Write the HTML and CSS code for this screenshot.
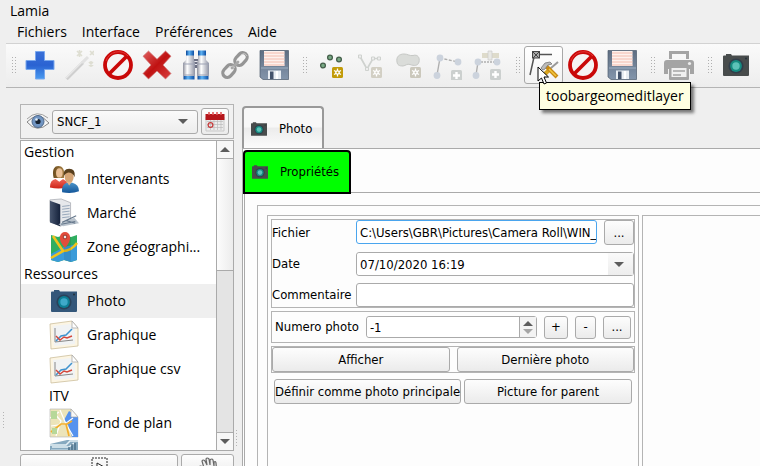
FILE: index.html
```html
<!DOCTYPE html>
<html lang="fr">
<head>
<meta charset="utf-8">
<title>Lamia</title>
<link rel="stylesheet" href="styles.css">
</head>
<body>
<svg class="defs" aria-hidden="true">
  <defs>
    <linearGradient id="blue" x1="0" y1="0" x2="0" y2="1"><stop offset="0" stop-color="#3a70d8"/><stop offset=".5" stop-color="#2a63d2"/><stop offset="1" stop-color="#4a9bf0"/></linearGradient>
    <linearGradient id="red" x1="0" y1="0" x2="1" y2="1"><stop offset="0" stop-color="#e06060"/><stop offset=".5" stop-color="#c01212"/><stop offset="1" stop-color="#d84040"/></linearGradient>
    <linearGradient id="tube" x1="0" y1="0" x2="1" y2="0"><stop offset="0" stop-color="#8d8f9c"/><stop offset=".35" stop-color="#ffffff"/><stop offset="1" stop-color="#8f93a4"/></linearGradient>
    <linearGradient id="lens" x1="0" y1="0" x2="1" y2="0"><stop offset="0" stop-color="#0a4596"/><stop offset=".4" stop-color="#5fb4f5"/><stop offset="1" stop-color="#0b4da4"/></linearGradient>
    <linearGradient id="steel" x1="0" y1="0" x2="0" y2="1"><stop offset="0" stop-color="#5f6e82"/><stop offset="1" stop-color="#8395ab"/></linearGradient>
    <linearGradient id="hair" x1="0" y1="0" x2="1" y2="0"><stop offset="0" stop-color="#6b4c1d"/><stop offset="1" stop-color="#a98347"/></linearGradient>
    <linearGradient id="redbody" x1="0" y1="0" x2="0" y2="1"><stop offset="0" stop-color="#f0675a"/><stop offset="1" stop-color="#cf2418"/></linearGradient>
    <linearGradient id="bluebody" x1="0" y1="0" x2="0" y2="1"><stop offset="0" stop-color="#4b93c8"/><stop offset="1" stop-color="#13569a"/></linearGradient>
    <linearGradient id="navy" x1="0" y1="0" x2="1" y2="0"><stop offset="0" stop-color="#47556e"/><stop offset="1" stop-color="#14213b"/></linearGradient>
  </defs>
  <symbol id="i-plus" viewBox="0 0 30 30"><path d="M10.500 1.500h9v9h9.500v9h-9.500v9.500h-9v-9.500h-9.500v-9h9.500z" fill="url(#blue)" stroke="#79a8ee" stroke-width="1" stroke-linejoin="round"/></symbol>
  <symbol id="i-wand" viewBox="0 0 30 30"><path d="M2.500 29L19 12.500" stroke="#cfcfcf" stroke-width="3.400"/><path d="M2 28L22 8" stroke="#e8e8e8" stroke-width="1.500"/><path d="M18 13l6-6" stroke="#e2e2e2" stroke-width="3"/><g stroke="#deded2" stroke-width="1.600"><path d="M13 1l5 5m0-5l-5 5M15.500 0v7M26 1l4 4m0-4l-4 4M25 12l4 4m0-4l-4 4M27 11v6"/></g></symbol>
  <symbol id="i-no" viewBox="0 0 30 30"><circle cx="15" cy="15" r="13" fill="#f6f3f3" stroke="#c90808" stroke-width="3.800"/><path d="M6 24L24 6" stroke="#c90808" stroke-width="3.800"/><path d="M3 11a13 13 0 0 1 22-5" fill="none" stroke="#e53535" stroke-width="1"/></symbol>
  <symbol id="i-cross" viewBox="0 0 30 30"><path d="M6.500 1L15 9.200 23.500 1 29 6.200 21 15l8 8.500-5.500 5.500-8.500-8-8.500 8L1 23.500 9 15 1 6.200z" fill="url(#red)" stroke="#d07a7a" stroke-width=".7"/></symbol>
  <symbol id="i-bino" viewBox="0 0 30 30"><path d="M12 9h6v9h-6z" fill="#6c7084"/><path d="M12 11.500h6M12 14.500h6" stroke="#e8e8ee"/><path d="M5 5h8v5l1 3v13H2V13l3-3z" fill="url(#tube)"/><path d="M17 5h8v5l3 3v13H16V13l1-3z" fill="url(#tube)"/><path d="M2 14h12M16 14h12M2 25h12M16 25h12" stroke="#9ea3b5"/><path d="M5 .5h8v5H5z" fill="url(#lens)"/><path d="M17 .5h8v5h-8z" fill="url(#lens)"/><path d="M2.500 26h11v3.500h-11z" fill="url(#lens)"/><path d="M16.500 26h11v3.500h-11z" fill="url(#lens)"/></symbol>
  <symbol id="i-link" viewBox="0 0 30 30"><g fill="none" stroke="#959595" stroke-width="3.200"><rect x="-7" y="-4.500" width="14" height="9" rx="4.500" transform="translate(21 9) rotate(-48)"/><rect x="-7" y="-4.500" width="14" height="9" rx="4.500" transform="translate(9 21) rotate(-48)"/></g><path d="M12 18l6-6" stroke="#a8a8a8" stroke-width="2.800" stroke-linecap="round"/><g fill="none" stroke="#c9c9c9" stroke-width="1"><path d="M17 9l4-4q4-3 6 1M5 21l4-4q4-2 6 1"/></g></symbol>
  <symbol id="i-save" viewBox="0 0 30 30"><path d="M1 .5h28.500v29H4L1 27z" fill="url(#steel)" stroke="#4e5b6d" stroke-width=".7"/><path d="M5 1h20.500v15H5z" fill="#fdf1ed"/><path d="M5 3h20.500M5 6h20.500M5 9h20.500M5 12h20.500M5 15h20.500" stroke="#f3bcae"/><path d="M2 18h27" stroke="#9fb0c4"/><rect x="9" y="20.500" width="13" height="8.500" fill="#e8edf2"/><rect x="11" y="21.500" width="3.500" height="7.500" fill="#43536b"/><path d="M18 21v8" stroke="#fff" stroke-width="2"/></symbol>
  <symbol id="i-star" viewBox="0 0 11 11"><rect width="11" height="11" rx="1.500"/><path d="M5.500 1.500v8M2 3.500l7 4M9 3.500l-7 4" stroke="#fff" stroke-width="1.300"/><circle cx="5.500" cy="5.500" r="2.300" fill="#fff"/><circle cx="5.500" cy="5.500" r="1"/></symbol>
  <symbol id="i-points" viewBox="0 0 30 30"><g fill="#79a985" stroke="#46604c" stroke-width="1.300"><circle cx="7" cy="15.500" r="2.400"/><circle cx="14" cy="7.500" r="2.400"/><circle cx="23" cy="9.500" r="2.400"/></g><use href="#i-star" x="16" y="17" width="11" height="11" fill="#c29b08"/></symbol>
  <symbol id="i-line" viewBox="0 0 30 30"><path d="M5 6.500L12 19l6-10.500h6" fill="none" stroke="#cfd2cf" stroke-width="1.700"/><g fill="#eee" stroke="#cfd2cf"><path d="M3.500 5h3v3h-3zM10.500 17.500h3v3h-3zM16.500 7h3v3h-3zM22.500 7h3v3h-3z"/></g><use href="#i-star" x="16" y="17" width="11" height="11" fill="#d2cfc4"/></symbol>
  <symbol id="i-poly" viewBox="0 0 30 30"><path d="M3 12c-1-5 2-8 7-8 4 0 5 2 9 1.500C24 4 26 8 25 12c-1 4-5 4-9 2.500-3-1-4 1-7 1.500-4 0-5.500-1-6-4z" fill="#dadcd9" stroke="#c6c8c5"/><use href="#i-star" x="16" y="17" width="11" height="11" fill="#cbc8bc"/></symbol>
  <symbol id="i-add" viewBox="0 0 11 11"><rect width="11" height="11" rx="1.500" fill="#ccd0cf"/><path d="M5.500 2v7M2 5.500h7" stroke="#fff" stroke-width="2.400"/></symbol>
  <symbol id="i-node" viewBox="0 0 30 30"><path d="M4 25L7 8" stroke="#afafaf" stroke-width="1.400"/><path d="M7 8l18 4" stroke="#afafaf" stroke-width="1.400" stroke-dasharray="3 1.500"/><g fill="#ccd3dd"><circle cx="4" cy="25.500" r="3.400"/><circle cx="7" cy="8" r="3.400"/><circle cx="25" cy="12" r="3.400"/></g><use href="#i-add" x="18" y="20" width="11" height="11"/></symbol>
  <symbol id="i-node2" viewBox="0 0 30 30"><path d="M10 3h17v5H10z" fill="#dedbcb"/><path d="M16 1h4v9h-4z" fill="#e9e9e5" stroke="#ccc" stroke-width=".7"/><path d="M4 25L6 12" stroke="#afafaf" stroke-width="1.400"/><path d="M6 12h19" stroke="#afafaf" stroke-width="1.400" stroke-dasharray="2 1"/><g fill="#ccd3dd"><circle cx="4" cy="25.500" r="3.400"/><circle cx="6" cy="12" r="3.400"/><circle cx="25" cy="12" r="3.400"/></g><use href="#i-add" x="18" y="19" width="11" height="11"/></symbol>
  <symbol id="i-edit" viewBox="0 0 30 30"><path d="M1 25L5 7M6 4.500h17" stroke="#555" stroke-width="1.500"/><rect x="3.500" y="1.500" width="7" height="6.500" fill="#aaa" stroke="#444"/><path d="M4 2l6 6m0-6L4 8" stroke="#444"/><path d="M29 12L16 23" stroke="#999" stroke-width="2"/><path d="M20 20l-6 6" stroke="#d9a520" stroke-width="4"/><path d="M17 16l11 11" stroke="#c98a12" stroke-width="4"/><path d="M20 19l7 7" stroke="#f2c740" stroke-width="1.500"/><path d="M12 18l4-5 5-1 2 2-4 1-3 4-2 1z" fill="#bbb" stroke="#777" stroke-width=".8"/></symbol>
  <symbol id="i-print" viewBox="0 0 30 30"><path d="M5 1h20v8h-3V4H8v5H5z" fill="#a4a4a4"/><path d="M0 13q0-3 3-3h24q3 0 3 3v11h-4v-5H4v5H0z" fill="#a4a4a4"/><path d="M5 17h20v12q0 1-1 1H6q-1 0-1-1z" fill="#a4a4a4"/><path d="M7.500 18h15v9h-15z" fill="#f0f0f0"/><path d="M9 21h12M9 25h8" stroke="#a4a4a4" stroke-width="1.700"/><circle cx="25.500" cy="13.500" r="1.600" fill="#eee"/></symbol>
  <symbol id="i-cam" viewBox="0 0 26 22"><path d="M3 0h5l1 1.500h17V21q0 1-1 1H1q-1 0-1-1V2.500q0-1 1-1h2z" fill="currentColor"/><circle cx="13" cy="12" r="7.600" fill="#25384a" opacity=".65"/><circle cx="13" cy="12" r="5.900" fill="var(--ring)"/><circle cx="13" cy="12" r="3.700" fill="var(--glass)"/><circle cx="23" cy="4.500" r="1" fill="#25303a"/></symbol>
  <symbol id="i-eye" viewBox="0 0 24 18"><path d="M1 9q11-12 22 1Q11 21 1 9z" fill="#f7f7f7" stroke="#858585"/><path d="M1 6Q11-4 22 5" fill="none" stroke="#a0a0a0"/><circle cx="12" cy="8.500" r="6" fill="#7195c2" stroke="#4b6689"/><circle cx="12" cy="8.500" r="2.600" fill="#16212f"/><circle cx="10.500" cy="6.500" r="1.300" fill="#e4f0fa"/></symbol>
  <symbol id="i-cal" viewBox="0 0 20 20"><path d="M1 5h18v14H1z" fill="#ececec" stroke="#c9c9c9"/><path d="M2 9.500h16M2 12.500h16M2 15.500h16M5.500 8v10M9 8v10M12.500 8v10M16 8v10" stroke="#bbb" stroke-width=".7"/><path d="M.5 2h19v6H.5z" fill="#b5161b"/><path d="M4 0v3M8 0v3M12 0v3M16 0v3" stroke="#df5b5b" stroke-width="1.600"/><circle cx="5.500" cy="13" r="2.400" fill="none" stroke="#c63b3b" stroke-width="1.200"/></symbol>
  <symbol id="i-people" viewBox="0 0 32 30"><path d="M5 14C3 6 5 1 10 1s7 4 6 13z" fill="url(#hair)"/><ellipse cx="11" cy="8.500" rx="3.500" ry="5" fill="#eac096"/><path d="M1 24q0-8 6-9l4 3 4-3 4 3v6q-9 2-18 0z" fill="url(#redbody)"/><path d="M14 29q-1-8 5-10h6q7 2 7 9-8 3-18 1z" fill="url(#bluebody)"/><ellipse cx="21.500" cy="12.500" rx="4.800" ry="6.800" fill="#d5a576"/><path d="M15.500 13q-1-9 6-9t6 9q-2-5-7-5-4 1-5 5z" fill="#59401d"/><path d="M19 18l2.500 4 3-4z" fill="#e2b58a"/></symbol>
  <symbol id="i-book" viewBox="0 0 32 30"><path d="M1 1l12-1 10 4v21L12 29 1 24z" fill="#e6e8eb" stroke="#8e939b" stroke-width=".6"/><path d="M1 2l11 4v23L1 25z" fill="url(#navy)"/><path d="M14 8l8-1M14 11l8-1M14 14l8-1M14 17l8-1M14 20l8-1" stroke="#92a3b8"/><path d="M10 27l17-7 5 6-17 3z" fill="#b9c3cd"/><path d="M13 27l15-3M18 23l10 3M14 25l15-7" stroke="#66788c" stroke-width="1.200"/></symbol>
  <symbol id="i-map" viewBox="0 0 28 30"><path d="M1 3l7 2 6-2 7 2 6-2v25l-6 2-7-2-6 2-7-2z" fill="#2fae60"/><path d="M1 22L14 15l13-3v16l-6 2-7-2-6 2-7-2z" fill="#3b9bd9"/><path d="M3 4l10 15L1 26M13 19q8 0 14-8" fill="none" stroke="#f2c21b" stroke-width="2.600"/><path d="M14 3v25l7 2V5z" fill="#000" opacity=".08"/><path d="M15 16q-6-7-5-11a5 5 0 0 1 10 0q1 4-5 11z" fill="#e34c3c"/><circle cx="15" cy="5" r="2.400" fill="#a7453a"/><circle cx="15" cy="5" r="1.200" fill="#eee"/></symbol>
  <symbol id="i-graph" viewBox="0 0 30 28"><path d="M1 3l22-3 6 7v18L2 28z" fill="#fcf5e3" stroke="#cdbf9c" stroke-width=".8"/><path d="M4 5l17-2 5 5v15L5 25z" fill="#f1f3f4"/><path d="M23 0v7h6z" fill="#fff" stroke="#aaa" stroke-width=".8"/><path d="M6 7v14l18-2" fill="none" stroke="#888"/><path d="M7 20l5-5 5-1 6-6" fill="none" stroke="#3f93ce" stroke-width="1.500"/><path d="M7 15l4 4 4-3 3 1 5-2" fill="none" stroke="#d5473b" stroke-width="1.400"/></symbol>
  <symbol id="i-plan" viewBox="0 0 30 30"><path d="M1 1h21l7 8v20H1z" fill="#ece4b9" stroke="#bbb" stroke-width=".7"/><path d="M20 3l9 6v20h-6l-4-12-4-5z" fill="#5592ee"/><path d="M4 4l8 9-5 15M2 18l14-2 8-6M11 2l6 14 7 12M1 10l9-6" fill="none" stroke="#fff" stroke-width="1.200"/><path d="M2 24l10-8 6 0 5-3M17 16l3 12" fill="none" stroke="#f3ae2b" stroke-width="1.700"/><path d="M2 3h6v8H2zM3 20h5v6H3z" fill="#b7d899"/><path d="M22 1v8h7z" fill="#f8f8f8" stroke="#aaa" stroke-width=".7"/></symbol>
  <symbol id="i-stack" viewBox="0 0 30 30"><path d="M1 4l17-4h11v24L17 30 1 29z" fill="#86a9bf"/><path d="M1 5h16l4-4h8M3 7h17l5-4" fill="none" stroke="#e4eff5" stroke-width="1.500"/><path d="M20 7v20M23 4v22M26 3v21" stroke="#416780" stroke-width="1.300"/><path d="M2 9h17v18H2z" fill="#abc6d6"/></symbol>
  <symbol id="i-select" viewBox="0 0 17 20"><rect x="1" y="1" width="15" height="12" fill="none" stroke="#222" stroke-dasharray="2 1"/><path d="M6 6l9 5-4 1 3 4-2 2-3-5-3 3z" fill="#fff" stroke="#222"/></symbol>
  <symbol id="i-hand" viewBox="0 0 20 22"><path d="M7 18L1 10q1-2 4 0l1 1L4 4q1-2 3 0l2 4-1-6q1-2 3 0l1 6V3q2-2 3 0l1 6 0-4q2-1 2 1l1 12z" fill="#eee" stroke="#666" stroke-width="1.200"/></symbol>
</svg>

<header>
  <h1 class="title">Lamia</h1>
  <nav class="menu">
    <button type="button">Fichiers</button>
    <button type="button">Interface</button>
    <button type="button">Préférences</button>
    <button type="button">Aide</button>
  </nav>
  <div class="toolbar" role="toolbar">
    <div class="group">
      <span class="grip"></span>
      <button type="button" aria-label="Ajouter"><svg><use href="#i-plus"/></svg></button>
      <button type="button" aria-label="Baguette"><svg><use href="#i-wand"/></svg></button>
      <button type="button" aria-label="Annuler"><svg><use href="#i-no"/></svg></button>
      <button type="button" aria-label="Supprimer"><svg><use href="#i-cross"/></svg></button>
      <button type="button" aria-label="Rechercher"><svg><use href="#i-bino"/></svg></button>
      <button type="button" aria-label="Lier"><svg><use href="#i-link"/></svg></button>
      <button type="button" aria-label="Enregistrer"><svg><use href="#i-save"/></svg></button>
    </div>
    <div class="group">
      <span class="grip"></span>
      <button type="button" aria-label="Point"><svg><use href="#i-points"/></svg></button>
      <button type="button" aria-label="Ligne"><svg><use href="#i-line"/></svg></button>
      <button type="button" aria-label="Polygone"><svg><use href="#i-poly"/></svg></button>
      <button type="button" aria-label="Ajouter un noeud"><svg><use href="#i-node"/></svg></button>
      <button type="button" aria-label="Ajouter une partie"><svg><use href="#i-node2"/></svg></button>
    </div>
    <div class="group">
      <span class="grip"></span>
      <span class="tipped">
        <button type="button" class="hover" aria-label="Modifier la géométrie" aria-describedby="tip"><svg><use href="#i-edit"/></svg></button>
        <span class="tooltip" role="tooltip" id="tip">toobargeomeditlayer</span>
        <svg class="pointer" viewBox="0 0 12 19"><path d="M1 1v14l3.500-3 2.500 6 2.500-1L7 11h4.500z" fill="#fff" stroke="#000"/></svg>
      </span>
      <button type="button" aria-label="Annuler la géométrie"><svg><use href="#i-no"/></svg></button>
      <button type="button" aria-label="Enregistrer la géométrie"><svg><use href="#i-save"/></svg></button>
    </div>
    <div class="group">
      <span class="grip"></span>
      <button type="button" aria-label="Imprimer"><svg><use href="#i-print"/></svg></button>
    </div>
    <div class="group">
      <span class="grip"></span>
      <button type="button" aria-label="Photo"><svg class="cam large"><use href="#i-cam"/></svg></button>
    </div>
  </div>
</header>

<main>
  <span class="splitter outer"></span>
  <aside>
    <div class="filter">
      <svg class="eye"><use href="#i-eye"/></svg>
      <div class="combo">
        <select aria-label="Base"><option>SNCF_1</option></select>
        <span class="arrow"></span>
      </div>
      <button type="button" class="box calendar" aria-label="Calendrier"><svg><use href="#i-cal"/></svg></button>
    </div>
    <div class="tree">
      <ul>
        <li class="head">Gestion</li>
        <li><svg><use href="#i-people"/></svg>Intervenants</li>
        <li><svg><use href="#i-book"/></svg>Marché</li>
        <li><svg><use href="#i-map"/></svg>Zone géographi...</li>
        <li class="head">Ressources</li>
        <li class="selected"><svg class="cam blue"><use href="#i-cam"/></svg>Photo</li>
        <li><svg><use href="#i-graph"/></svg>Graphique</li>
        <li><svg><use href="#i-graph"/></svg>Graphique csv</li>
        <li class="head sub">ITV</li>
        <li><svg><use href="#i-plan"/></svg>Fond de plan</li>
        <li class="last"><svg><use href="#i-stack"/></svg></li>
      </ul>
      <div class="scroll">
        <button type="button" aria-label="Monter"><span class="arrow up"></span></button>
        <span class="thumb"></span>
        <span class="track"></span>
        <button type="button" aria-label="Descendre"><span class="arrow"></span></button>
      </div>
    </div>
    <div class="tools">
      <button type="button" class="box wide" aria-label="Sélection"><svg class="select"><use href="#i-select"/></svg></button>
      <button type="button" class="box" aria-label="Déplacer"><svg class="hand"><use href="#i-hand"/></svg></button>
    </div>
  </aside>
  <span class="splitter inner"></span>

  <section class="pane">
    <button type="button" class="tab"><svg class="cam"><use href="#i-cam"/></svg>Photo</button>
    <div class="page">
      <div class="subtabs">
        <button type="button" class="tab active"><svg class="cam"><use href="#i-cam"/></svg>Propriétés</button>
      </div>
      <div class="subpage">
        <div class="sheet">
          <form class="form">
            <div class="frame fields">
              <label for="file">Fichier</label>
              <div class="row">
                <input id="file" class="focus" type="text" value="C:\Users\GBR\Pictures\Camera Roll\WIN_">
                <button type="button" class="box more">...</button>
              </div>
              <label for="date">Date</label>
              <div class="combo date">
                <input id="date" type="text" value="07/10/2020 16:19">
                <span class="drop"><span class="arrow"></span></span>
              </div>
              <label for="comment">Commentaire</label>
              <input id="comment" type="text">
            </div>
            <div class="frame number">
              <label for="num">Numero photo</label>
              <div class="spin">
                <input id="num" type="text" value="-1">
                <span class="steps"><span class="arrow up"></span><span class="arrow dim"></span></span>
              </div>
              <button type="button" class="box plus">+</button>
              <button type="button" class="box minus">-</button>
              <button type="button" class="box dots">...</button>
            </div>
            <div class="frame actions">
              <button type="button" class="box">Afficher</button>
              <button type="button" class="box">Dernière photo</button>
            </div>
            <div class="links">
              <button type="button" class="box">Définir comme photo principale</button>
              <button type="button" class="box grow">Picture for parent</button>
            </div>
          </form>
          <div class="preview"></div>
        </div>
      </div>
    </div>
  </section>
</main>
</body>
</html>
```
FILE: styles.css
```css
* { box-sizing: border-box; }

body {
  margin: 0;
  height: 100vh;
  display: flex;
  flex-direction: column;
  overflow: hidden;
  background: #efefef;
  color: #000;
  font: 14px/20px "Open Sans", "Noto Sans", sans-serif;
}

button, input, select {
  margin: 0;
  padding: 0;
  border: 0;
  background: none;
  color: inherit;
  font: inherit;
}

svg { display: block; flex: none; width: 30px; height: 30px; }
.defs { position: absolute; width: 0; height: 0; }

header { flex: none; padding-left: 6px; }
.title { margin: 0; padding: 1px 4px 0; font-size: 14px; font-weight: 400; }
.menu { display: flex; gap: 15px; height: 22px; padding-left: 11px; }

.toolbar {
  display: flex;
  gap: 10px;
  height: 45px;
  padding: 0 0 1px 6px;
  border-top: 1px solid #d2d2d2;
  border-bottom: 1px solid #b4b4b4;
  background: linear-gradient(#fafafa, #ededed);
}
.group { display: flex; align-items: center; }
.group button {
  display: flex;
  align-items: center;
  justify-content: center;
  width: 39px;
  height: 38px;
}
.grip {
  width: 4px;
  height: 17px;
  margin-right: 4px;
  background: radial-gradient(circle at 0 0, #b0b0b0 1px, transparent 1px) 0 0 / 3px 3px;
}
.tipped { position: relative; }
.group .hover {
  border: 1px solid #a8a8a8;
  border-radius: 3px;
  background: linear-gradient(#fff, #f3f3f3);
}
.tooltip {
  position: absolute;
  z-index: 2;
  left: 15px;
  top: 36px;
  padding: 1px 6px;
  border: 1px solid #000;
  background: #ffffe1;
  box-shadow: 3px 3px 3px rgba(0, 0, 0, .5);
  line-height: 24px;
}
.pointer {
  position: absolute;
  z-index: 3;
  left: 13px;
  top: 20px;
  width: 12px;
  height: 19px;
}

.cam { width: 16px; height: 14px; color: #484c4c; --ring: #168b80; --glass: #5cc2b8; }
.cam.large { width: 26px; height: 22px; }
.tree .cam.blue { height: 22px; color: #34577a; --ring: #0d7f96; --glass: #3fa9c9; }

main { flex: 1; min-height: 0; display: flex; padding-top: 16px; }
.splitter {
  flex: none;
  width: 2px;
  height: 17px;
  background: radial-gradient(circle at 0 0, #b4b4b4 1px, transparent 1px) 0 0 / 2px 3px;
}
.outer { margin: 308px 15px 0 3px; }
.inner { margin: 326px 4px 0 2px; }

aside { flex: none; width: 214px; min-height: 0; display: flex; flex-direction: column; }
.filter {
  display: flex;
  align-items: center;
  height: 35px;
  margin-bottom: 1px;
  padding: 0 4px 0 5px;
  border: 1px solid #b4b4b4;
  background: #f1f1f1;
}
.eye { width: 24px; height: 18px; margin-right: 2px; }

.arrow {
  width: 0;
  height: 0;
  border: 5px solid transparent;
  border-top-color: #5c5c5c;
  border-bottom-width: 0;
}
.arrow.up { border-width: 0 5px 5px; border-bottom-color: #5c5c5c; }
.arrow.dim { border-top-color: #a5a5a5; }

.combo { display: flex; align-items: center; flex: 1; min-width: 0; border: 1px solid #aaa; border-radius: 3px; }
.filter .combo {
  height: 24px;
  margin-right: 3px;
  padding-right: 9px;
  background: linear-gradient(#fafafa, #ededed);
  font: 13px/16px "DejaVu Sans Condensed", "DejaVu Sans", sans-serif;
}
select { appearance: none; flex: 1; min-width: 0; height: 22px; padding-left: 4px; }

.box {
  display: flex;
  align-items: center;
  justify-content: center;
  border: 1px solid #aaa;
  border-radius: 3px;
  background: linear-gradient(#fdfdfd, #ebebeb);
}
.calendar { width: 28px; height: 27px; }
.calendar svg { width: 20px; height: 20px; }

.tree {
  flex: 1;
  min-height: 0;
  display: flex;
  overflow: hidden;
  border: 1px solid #aaa;
  background: #fff;
}
ul { flex: 1; margin: 0; padding: 1px 0 0; list-style: none; }
li { display: flex; align-items: center; gap: 8px; height: 34px; padding-left: 28px; }
li svg { width: 30px; height: 30px; }
.tree .cam { width: 26px; margin: 0 2px; }
li.head { height: 20px; padding-left: 3px; }
li.sub { padding-left: 28px; }
li.selected { background: #efefef; }
li.last { align-items: flex-start; }
.scroll { display: flex; flex-direction: column; width: 17px; border-left: 1px solid #aaa; }
.scroll button {
  display: flex;
  align-items: center;
  justify-content: center;
  height: 17px;
  background: #f7f7f7;
}
.thumb {
  height: 113px;
  border: solid #aaa;
  border-width: 1px 0;
  background: linear-gradient(90deg, #fcfcfc, #ececec);
}
.track { flex: 1; border-bottom: 1px solid #aaa; background: #e4e4e4; }

.tools { display: flex; gap: 3px; height: 24px; margin: 3px 0 -12px; }
.tools .box { width: 53px; align-items: flex-start; }
.tools .wide { flex: 1; width: auto; }
.select { width: 17px; height: 20px; margin-top: 2px; }
.hand { width: 20px; height: 22px; margin-top: 2px; }

.pane {
  flex: 1;
  min-width: 0;
  display: flex;
  flex-direction: column;
  padding-top: 2px;
  font: 13px/16px "DejaVu Sans Condensed", "DejaVu Sans", sans-serif;
}
.tab {
  display: flex;
  align-items: center;
  align-self: flex-start;
  gap: 12px;
  height: 43px;
  padding: 0 10px 0 7px;
  border: 2px solid #999;
  border-bottom: 0;
  border-radius: 4px 4px 0 0;
  background: linear-gradient(#f8f8f8 45%, #ececec 50%, #fcfcfc);
}
.page {
  flex: 1;
  min-height: 0;
  display: flex;
  flex-direction: column;
  margin-top: -1px;
  padding-top: 1px;
  border: solid #aaa;
  border-width: 1px 0 0 1px;
  background: #fdfdfd;
}
.subtabs { position: relative; }
.tab.active { height: 44px; border: 2px solid #000; background: #0f0; }
.subpage {
  flex: 1;
  min-height: 0;
  display: flex;
  margin: -2px 0 0 1px;
  padding: 12px 0 0 12px;
  border: solid #aaa;
  border-width: 1px 0 0 1px;
}
.sheet {
  flex: 1;
  display: flex;
  gap: 3px;
  padding: 9px 0 0 9px;
  border: solid #b4b4b4;
  border-width: 1px 0 0 1px;
}
.form {
  flex: none;
  width: 372px;
  padding: 3px;
  border: solid #b4b4b4;
  border-width: 1px 1px 0;
}
.preview { flex: 1; border: solid #b4b4b4; border-width: 1px 0 0 1px; }

.frame { border: 1px solid #b4b4b4; }
.fields {
  display: grid;
  grid-template-columns: 84px 1fr;
  align-items: center;
  row-gap: 7px;
  margin-bottom: 3px;
}
.row { display: flex; gap: 7px; }
.form input {
  width: 100%;
  min-width: 0;
  height: 24px;
  padding: 0 3px;
  border: 1px solid #aaa;
  border-radius: 3px;
  background: #fff;
}
.form input.focus { padding-right: 0; border-color: #4aa5ee; outline: 0; }
.more { flex: none; width: 30px; height: 25px; }
.form .date input { height: 22px; border: 0; }
.drop {
  display: flex;
  align-items: center;
  padding: 0 9px 0 6px;
  height: 22px;
  background: linear-gradient(#fafafa, #ededed);
}
.number { display: flex; align-items: center; gap: 7px; height: 32px; margin-bottom: 3px; padding: 0 3px; }
.spin { display: flex; flex: 1; border: 1px solid #aaa; border-radius: 3px; background: #fff; }
.form .spin input { height: 20px; border: 0; }
.steps {
  display: flex;
  flex-direction: column;
  align-items: center;
  justify-content: center;
  gap: 3px;
  width: 17px;
  flex: none;
  border-left: 1px solid #aaa;
  background: #f3f3f3;
}
.number .box { height: 23px; }
.plus { width: 24px; }
.minus { width: 21px; }
.dots { width: 28px; }
.actions { display: grid; grid-template-columns: 1fr 1fr; gap: 7px; }
.actions .box { height: 25px; }
.links { display: flex; gap: 3px; padding: 6px 3px; }
.links .box { height: 25px; }
.links .grow { flex: 1; }
```
